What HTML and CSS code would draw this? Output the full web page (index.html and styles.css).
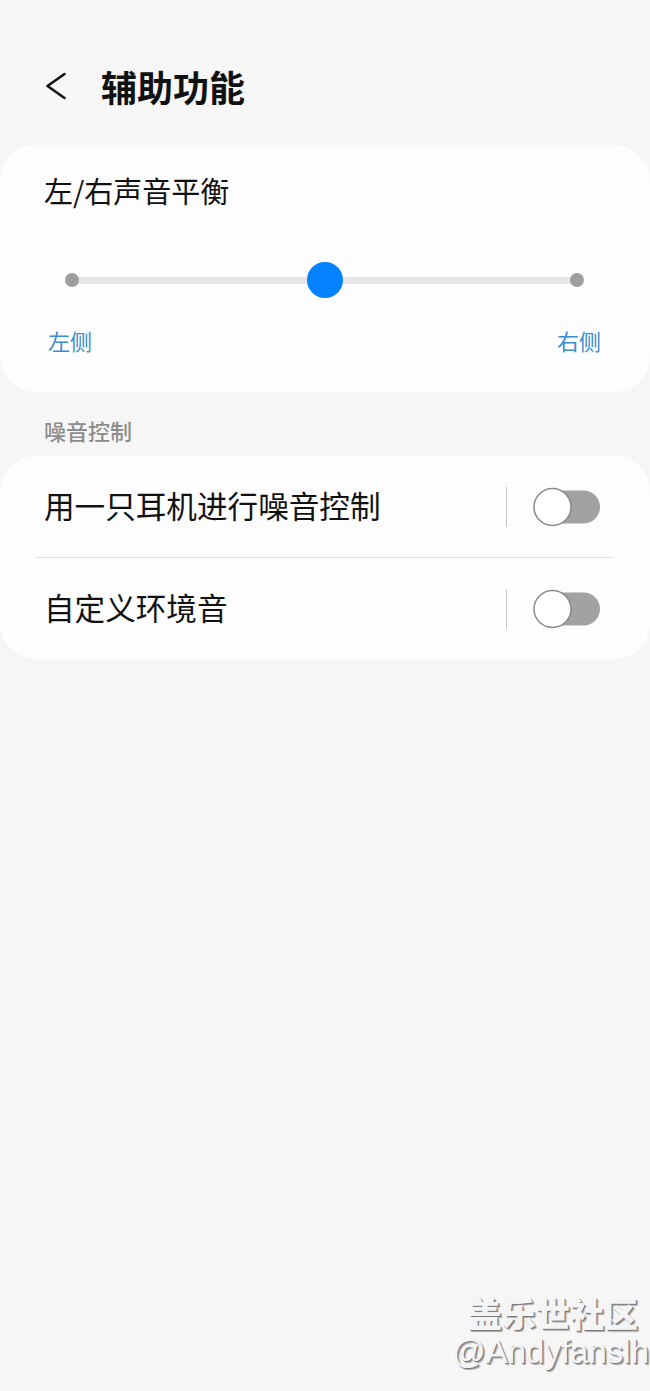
FILE: index.html
```html
<!DOCTYPE html>
<html lang="zh-CN">
<head>
  <meta charset="UTF-8" />
  <meta name="viewport" content="width=device-width, initial-scale=1.0"/>
  <title>辅助功能</title>
  <link rel="stylesheet" href="styles.css">
</head>
<body>

  <!-- barra superior -->
  <header class="topo">
    <svg class="voltar" width="22" height="28" viewBox="0 0 22 28">
      <polyline points="19.5,2 2.5,14 19.5,26" fill="none" stroke="#111" stroke-width="2.6" stroke-linecap="round" stroke-linejoin="round"/>
    </svg>
    <h1>辅助功能</h1>
  </header>

  <!-- equilibrio esquerda / direita -->
  <section class="cartao balanco">
    <div class="balanco-titulo">左/右声音平衡</div>
    <div class="slider">
      <span class="trilha"></span>
      <span class="ponto esq"></span>
      <span class="ponto dir"></span>
      <span class="polegar"></span>
    </div>
    <div class="lados">
      <span>左侧</span>
      <span>右侧</span>
    </div>
  </section>

  <div class="secao">噪音控制</div>

  <section class="cartao">
    <div class="linha">
      <span class="linha-texto">用一只耳机进行噪音控制</span>
      <span class="separador"></span>
      <svg class="chave" width="68" height="40" viewBox="0 0 68 40">
        <rect x="10" y="3.5" width="57" height="33" rx="16.5" fill="#a2a2a2"/>
        <circle cx="19.5" cy="20" r="18.5" fill="#fff" stroke="#8a8a8a" stroke-width="1.5"/>
      </svg>
    </div>
    <div class="divisor"></div>
    <div class="linha">
      <span class="linha-texto">自定义环境音</span>
      <span class="separador"></span>
      <svg class="chave" width="68" height="40" viewBox="0 0 68 40">
        <rect x="10" y="3.5" width="57" height="33" rx="16.5" fill="#a2a2a2"/>
        <circle cx="19.5" cy="20" r="18.5" fill="#fff" stroke="#8a8a8a" stroke-width="1.5"/>
      </svg>
    </div>
  </section>

  <!-- marca d'agua -->
  <div class="marca">
    <div class="marca-nome">盖乐世社区</div>
    <div class="marca-autor">@Andyfanslh</div>
  </div>

</body>
</html>
```

FILE: styles.css
```css
:root {
  --fundo: #f6f6f6;
  --cartao: #fdfdfd;
  --texto: #111111;
  --azul: #0381fe;
  --azul-rotulo: #3a8dcf;
}

* {
  margin: 0;
  padding: 0;
  box-sizing: border-box;
}

body {
  font-family: "Noto Sans CJK SC", "Noto Sans", sans-serif;
  background-color: var(--fundo);
  color: var(--texto);
  min-height: 100vh;
  position: relative;
}

.topo {
  display: flex;
  align-items: center;
  height: 145px;
  padding: 58px 0 31px 45px;
}

.voltar {
  flex-shrink: 0;
  margin-right: 34px;
}

.topo h1 {
  font-size: 36px;
  font-weight: 700;
  line-height: 56px;
}

.cartao {
  background-color: var(--cartao);
  border-radius: 36px;
}

.balanco {
  height: 247px;
  padding-top: 26px;
}

.balanco-titulo {
  font-size: 29px;
  line-height: 39px;
  padding-left: 44px;
}

/* trilha com pontos nas pontas */
.slider {
  position: relative;
  display: flex;
  align-items: center;
  justify-content: space-between;
  height: 36px;
  margin: 52px 66px 0 65px;
}

.trilha {
  position: absolute;
  left: 7px;
  right: 7px;
  top: 15px;
  height: 7px;
  background-color: #e6e6e6;
}

.ponto {
  position: relative;
  width: 14px;
  height: 14px;
  border-radius: 50%;
  background-color: #9e9e9e;
}

.polegar {
  position: absolute;
  left: 50%;
  top: 0;
  width: 36px;
  height: 36px;
  margin-left: -18px;
  border-radius: 50%;
  background-color: var(--azul);
}

.lados {
  display: flex;
  justify-content: space-between;
  margin-top: 28px;
  padding: 0 49px 0 48px;
  font-size: 22px;
  line-height: 29px;
  color: var(--azul-rotulo);
}

.secao {
  font-size: 22px;
  line-height: 30px;
  font-weight: 500;
  color: #8c8c8c;
  padding-left: 44px;
  margin: 23px 0 11px;
}

.linha {
  display: flex;
  align-items: center;
  height: 101px;
  padding: 0 49px 0 44px;
}

.linha-texto {
  flex: 1;
  font-size: 30.6px;
  padding-bottom: 3px;
}

.separador {
  width: 1.5px;
  height: 40px;
  background-color: #c6c6c6;
  margin-right: 27px;
}

.chave {
  display: block;
  margin-left: -1px;
}

.divisor {
  height: 1px;
  margin: 0 36px;
  background-color: #e2e2e2;
}

.marca {
  position: absolute;
  right: 0;
  bottom: 20px;
  text-align: right;
  color: #f4f4f4;
  text-shadow: 1px 1px 0 #7a7a7a, 2px 2px 1px #a8a8a8;
}

.marca-nome {
  font-size: 34px;
  font-weight: 900;
  line-height: 40px;
  margin-right: 12px;
}

.marca-autor {
  font-family: "Liberation Sans", Arial, sans-serif;
  font-size: 33px;
  line-height: 38px;
  margin-right: 1px;
}
```
